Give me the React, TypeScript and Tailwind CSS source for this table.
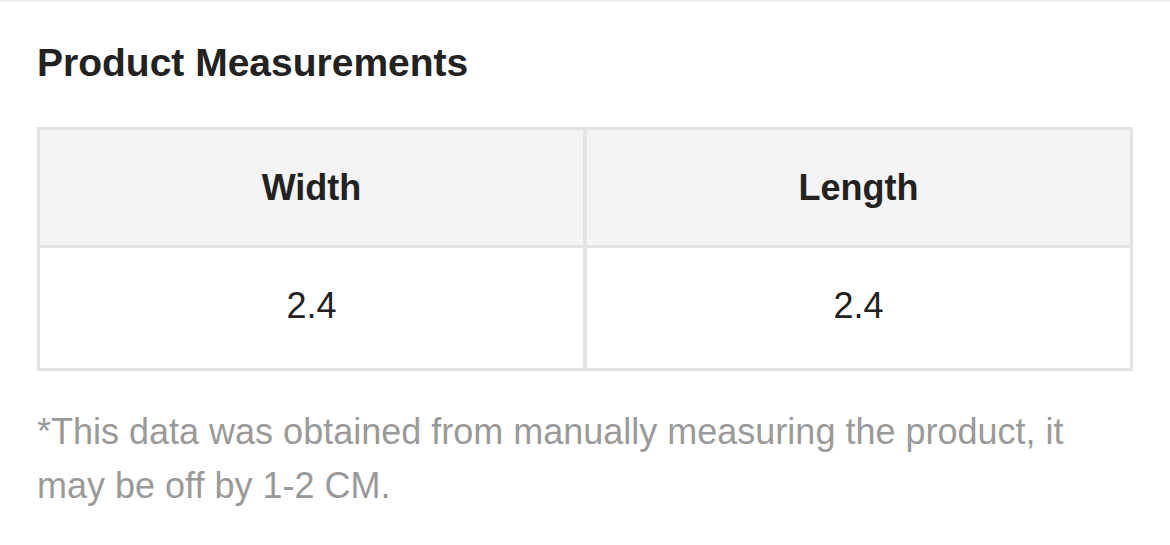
import React from "react";

export default function App() {
  return (
    <div
      className="w-[1170px] h-[545px] bg-white overflow-hidden border-t-2 border-[#eeeeee]"
      style={{ fontFamily: '"Liberation Sans", Arial, sans-serif' }}
    >
      <div className="px-[37px] pt-[38px]">
        <h2 className="text-[39px] leading-[45px] font-bold text-[#222222]">Product Measurements</h2>
        <div className="mt-[42px] grid grid-cols-2 gap-x-[4px] gap-y-[3px] bg-[#e3e3e3] p-[3px]">
          <div className="bg-[#f4f4f4] h-[115px] flex items-center justify-center text-[36px] font-bold text-[#222222]">
            Width
          </div>
          <div className="bg-[#f4f4f4] h-[115px] flex items-center justify-center text-[36px] font-bold text-[#222222]">
            Length
          </div>
          <div className="bg-white h-[120px] flex items-center justify-center text-[36px] text-[#222222] pb-[4px]">
            2.4
          </div>
          <div className="bg-white h-[120px] flex items-center justify-center text-[36px] text-[#222222] pb-[4px]">
            2.4
          </div>
        </div>
        <p className="mt-[34px] text-[36px] leading-[54px] text-[#9a9a9a]">
          *This data was obtained from manually measuring the product, it may be off by 1-2 CM.
        </p>
      </div>
    </div>
  );
}
